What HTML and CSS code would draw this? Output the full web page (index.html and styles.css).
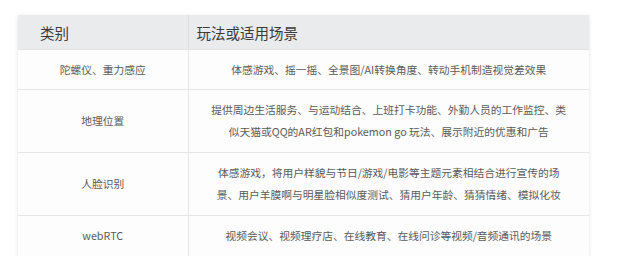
FILE: index.html
```html
<!DOCTYPE html>
<html lang="zh-CN">
<head>
<meta charset="utf-8">
<title>场景表</title>
<link rel="stylesheet" href="styles.css">
</head>
<body>
<div class="page">
  <table class="scenes">
    <thead>
      <tr>
        <th class="h-cat">类别</th>
        <th class="h-use">玩法或适用场景</th>
      </tr>
    </thead>
    <tbody>
      <tr>
        <td class="cat">陀螺仪、重力感应</td>
        <td class="use">体感游戏、摇一摇、全景图/AI转换角度、转动手机制造视觉差效果</td>
      </tr>
      <tr class="multi">
        <td class="cat">地理位置</td>
        <td class="use">提供周边生活服务、与运动结合、上班打卡功能、外勤人员的工作监控、类<br>似天猫或QQ的AR红包和pokemon go 玩法、展示附近的优惠和广告</td>
      </tr>
      <tr class="multi">
        <td class="cat">人脸识别</td>
        <td class="use">体感游戏，将用户样貌与节日/游戏/电影等主题元素相结合进行宣传的场<br>景、用户羊膜啊与明星脸相似度测试、猜用户年龄、猜猜情绪、模拟化妆</td>
      </tr>
      <tr>
        <td class="cat">webRTC</td>
        <td class="use">视频会议、视频理疗店、在线教育、在线问诊等视频/音频通讯的场景</td>
      </tr>
    </tbody>
  </table>
</div>
</body>
</html>
```

FILE: styles.css
```css
html, body {
  margin: 0;
  padding: 0;
  background: #ffffff;
}

.page {
  padding: 15px 0 0 18px;
  font-family: "Noto Sans CJK SC", "Noto Sans", sans-serif;
}

.scenes {
  width: 571px;
  border-collapse: collapse;
  background: #fdfdfd;
  box-shadow: 0 1px 4px rgba(0, 0, 0, 0.13);
}

.scenes th {
  height: 34px;
  padding: 0;
  background: #e9ebed;
  color: #3a3a3a;
  font-size: 14.5px;
  font-weight: normal;
  text-align: left;
  border-bottom: 1px solid #e2e4e6;
}

.h-cat {
  width: 170px;
  padding-left: 22px !important;
  border-right: 1px solid #dcdee0;
  box-sizing: border-box;
}

.h-use {
  padding-left: 8px !important;
}

.scenes td {
  padding: 9px 0 8px;
  font-size: 10.75px;
  line-height: 22px;
  color: #5a5a5a;
  text-align: center;
  white-space: nowrap;
  border-bottom: 1px solid #e6e6e6;
}

.scenes tr.multi td {
  padding-bottom: 9px;
}

.scenes td.cat {
  border-right: 1px solid #e6e6e6;
}

.scenes tbody tr:last-child td {
  border-bottom: none;
  padding-bottom: 9px;
}
```
